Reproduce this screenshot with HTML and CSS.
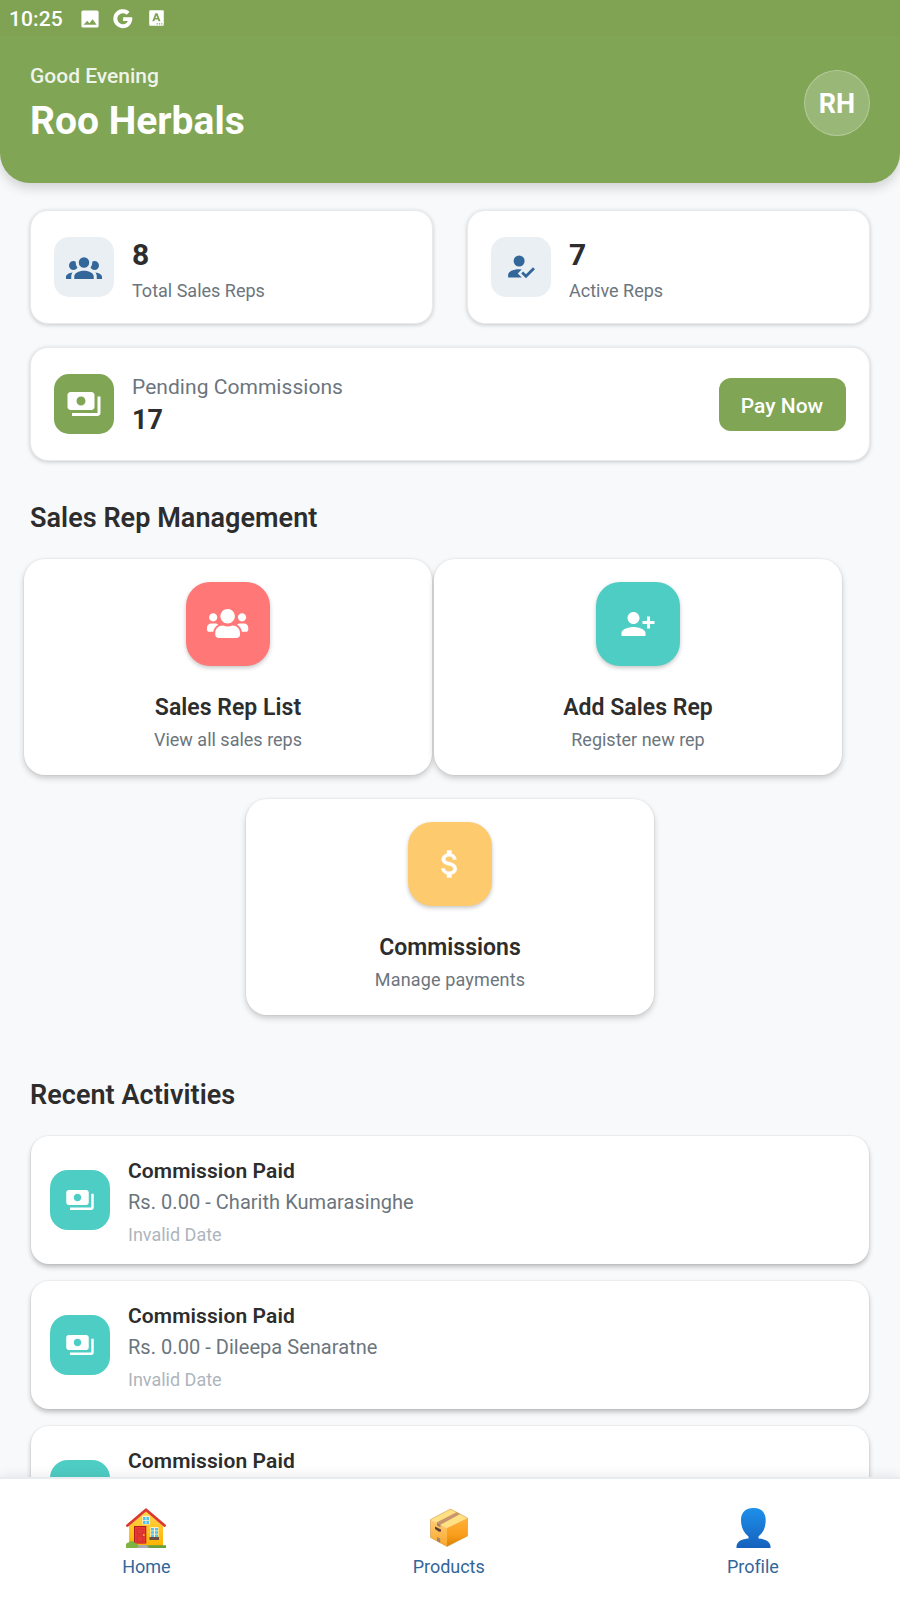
FILE: index.html
```html
<!DOCTYPE html>
<html lang="en">
<head>
<meta charset="utf-8">
<title>Roo Herbals</title>
<link rel="stylesheet" href="styles.css">
</head>
<body>
<svg class="sprite" aria-hidden="true">
  <symbol id="payments" viewBox="0 0 24 24"><path d="M19 14V6c0-1.1-.9-2-2-2H3c-1.1 0-2 .9-2 2v8c0 1.1.9 2 2 2h14c1.1 0 2-.9 2-2zm-9-1c-1.66 0-3-1.34-3-3s1.34-3 3-3 3 1.34 3 3-1.34 3-3 3zm13-6v11c0 1.1-.9 2-2 2H4v-2h17V7h2z"/></symbol>
</svg>
<div class="screen">
  <header class="header">
    <div class="statusbar">
      <span class="clock">10:25</span>
      <svg class="status-photo" viewBox="0 0 18 18"><path fill-rule="evenodd" d="M2 .5h14q1.600 0 1.600 1.600v13.800q0 1.600-1.600 1.600H2Q.4 17.500.4 15.900V2.100Q.4.5 2 .5zM2.600 14.700h13L11.600 9.200l-3.200 4-2.200-2.400z"/></svg>
      <svg class="status-google" viewBox="0 0 20 20"><path d="M10.100 8.200h9.100a9.500 9.500 0 1 1-2.700-5.300l-2.900 2.800a5.500 5.500 0 1 0 1.300 6.200h-4.800z"/></svg>
      <svg class="status-letter" viewBox="0 0 15 16"><path fill-rule="evenodd" d="M1.200.2h12.600q1 0 1 1v13.600q0 1-1 1H1.200q-1 0-1-1V1.200q0-1 1-1zM6.300 3.200 3.300 11.200h2l.6-1.600h3l.6 1.600h2l-3-8zm1.100 2.200.9 2.700H6.500zM7.600 13.300v1.300h1.200v-1.300zm2.300 0v1.300h1.200v-1.300zm2.300 0v1.300h1.200v-1.300z"/></svg>
    </div>
    <div class="header-row">
      <div class="greeting">
        <div class="hello">Good Evening</div>
        <h1 class="name">Roo Herbals</h1>
      </div>
      <div class="avatar">RH</div>
    </div>
  </header>

  <main class="content">
    <div class="stats">
      <div class="card stat">
        <div class="tile pale"><svg class="i36" viewBox="0 0 24 24"><path d="M12,5.5A3.5,3.5 0 0,1 15.5,9A3.5,3.5 0 0,1 12,12.5A3.5,3.5 0 0,1 8.5,9A3.5,3.5 0 0,1 12,5.5M5,8C5.56,8 6.08,8.15 6.53,8.42C6.38,9.85 6.8,11.27 7.66,12.38C7.16,13.34 6.16,14 5,14A3,3 0 0,1 2,11A3,3 0 0,1 5,8M19,8A3,3 0 0,1 22,11A3,3 0 0,1 19,14C17.84,14 16.84,13.34 16.34,12.38C17.2,11.27 17.62,9.85 17.47,8.42C17.92,8.15 18.44,8 19,8M5.5,18.25C5.5,16.18 8.41,14.5 12,14.5C15.59,14.5 18.5,16.18 18.5,18.25V20H5.5V18.25M0,20V18.5C0,17.11 1.89,15.94 4.45,15.6C3.86,16.28 3.5,17.22 3.5,18.25V20H0M24,20H20.5V18.25C20.5,17.22 20.14,16.28 19.55,15.6C22.11,15.94 24,17.11 24,18.5V20Z"/></svg></div>
        <div class="stat-text"><div class="stat-value">8</div><div class="stat-label">Total Sales Reps</div></div>
      </div>
      <div class="card stat">
        <div class="tile pale"><svg class="i33" viewBox="0 0 24 24"><path d="M21.1,12.5L22.5,13.91L15.97,20.5L12.5,17L13.9,15.59L15.97,17.67L21.1,12.5M10,17L13,20H3V18C3,15.79 6.58,14 11,14L12.89,14.11L10,17M11,4A4,4 0 0,1 15,8A4,4 0 0,1 11,12A4,4 0 0,1 7,8A4,4 0 0,1 11,4Z"/></svg></div>
        <div class="stat-text"><div class="stat-value">7</div><div class="stat-label">Active Reps</div></div>
      </div>
    </div>

    <div class="card stat pending">
      <div class="tile green"><svg class="i36"><use href="#payments"/></svg></div>
      <div class="pending-text"><div class="pending-label">Pending Commissions</div><div class="pending-value">17</div></div>
      <button class="pay">Pay Now</button>
    </div>

    <h2 class="section">Sales Rep Management</h2>
    <div class="actions">
      <div class="action">
        <div class="badge red"><svg class="users" viewBox="0 0 640 512"><path d="M96 224c35.3 0 64-28.7 64-64s-28.7-64-64-64-64 28.7-64 64 28.7 64 64 64zm448 0c35.3 0 64-28.7 64-64s-28.7-64-64-64-64 28.7-64 64 28.7 64 64 64zm32 32h-64c-17.6 0-33.5 7.1-45.1 18.6 40.3 22.1 68.9 62 75.1 109.4h66c17.7 0 32-14.3 32-32v-32c0-35.3-28.7-64-64-64zm-256 0c61.9 0 112-50.1 112-112S381.9 32 320 32 208 82.1 208 144s50.1 112 112 112zm76.8 32h-8.3c-20.8 10-43.9 16-68.5 16s-47.6-6-68.5-16h-8.3C179.6 288 128 339.6 128 403.2V432c0 26.5 21.5 48 48 48h288c26.5 0 48-21.5 48-48v-28.8c0-63.600-51.600-115.200-115.200-115.200zm-223.700-13.400C161.500 263.100 145.600 256 128 256H64c-35.300 0-64 28.700-64 64v32c0 17.700 14.300 32 32 32h65.900c6.300-47.400 34.900-87.300 75.200-109.400z"/></svg></div>
        <div class="action-title">Sales Rep List</div>
        <div class="action-sub">View all sales reps</div>
      </div>
      <div class="action">
        <div class="badge teal"><svg class="i36" viewBox="0 0 24 24"><path d="M13 8c0-2.21-1.79-4-4-4S5 5.79 5 8s1.79 4 4 4 4-1.79 4-4zm2 2v2h3v3h2v-3h3v-2h-3V7h-2v3h-3zM1 18v2h16v-2c0-2.660-5.330-4-8-4s-8 1.340-8 4z"/></svg></div>
        <div class="action-title">Add Sales Rep</div>
        <div class="action-sub">Register new rep</div>
      </div>
    </div>
    <div class="actions centered">
      <div class="action">
        <div class="badge amber"><svg class="i36 dollar" viewBox="0 0 24 24"><path d="M11.800 10.900c-2.270-.590-3-1.200-3-2.150 0-1.090 1.010-1.850 2.700-1.850 1.780 0 2.440.850 2.500 2.100h2.210c-.070-1.720-1.120-3.300-3.210-3.810V3h-3v2.160c-1.940.420-3.500 1.680-3.500 3.610 0 2.310 1.910 3.460 4.700 4.130 2.500.6 3 1.480 3 2.410 0 .690-.490 1.790-2.700 1.790-2.060 0-2.870-.920-2.980-2.100h-2.200c.12 2.190 1.760 3.420 3.680 3.830V21h3v-2.150c1.950-.370 3.500-1.500 3.500-3.550 0-2.840-2.430-3.810-4.700-4.400z"/></svg></div>
        <div class="action-title">Commissions</div>
        <div class="action-sub wide">Manage payments</div>
      </div>
    </div>

    <h2 class="section recent">Recent Activities</h2>
    <div class="activities">
      <div class="activity">
        <div class="tile teal"><svg class="i30"><use href="#payments"/></svg></div>
        <div><div class="act-title">Commission Paid</div><div class="act-desc">Rs. 0.00 - Charith Kumarasinghe</div><div class="act-date">Invalid Date</div></div>
      </div>
      <div class="activity">
        <div class="tile teal"><svg class="i30"><use href="#payments"/></svg></div>
        <div><div class="act-title">Commission Paid</div><div class="act-desc">Rs. 0.00 - Dileepa Senaratne</div><div class="act-date">Invalid Date</div></div>
      </div>
      <div class="activity">
        <div class="tile teal"></div>
        <div><div class="act-title">Commission Paid</div></div>
      </div>
    </div>
  </main>

  <nav class="nav">
    <a class="nav-item">
      <svg class="emoji" viewBox="0 0 40 40">
        <defs><linearGradient id="wall" x1="0" y1="0" x2="0" y2="1"><stop offset="0" stop-color="#ffd54a"/><stop offset="1" stop-color="#ffb300"/></linearGradient></defs>
        <path fill="url(#wall)" d="M3 18 20 3l17 15v20H3z"/>
        <path fill="#689f38" d="M16 37.200h24V40H0v-1.200z"/>
        <path fill="#aaa" d="M12 37h9l2 3H10z"/>
        <path fill="#b71c1c" d="M8 18h12.300v17.500H8z"/>
        <path fill="#e53935" d="M9 19h10.300v16.500H9z"/>
        <path fill="none" stroke="#c62828" stroke-width=".6" d="M11 21h6v5h-6zM11 28h6v6h-6z"/>
        <circle cx="17.800" cy="27" r="1" fill="#ffc107"/>
        <path fill="#fff3c4" d="M16.200 7.800h7.600v8.700h-7.600zM24.300 19h8.200v11h-8.200z"/>
        <path fill="#4fc3f7" d="M17 9h2.600v3H17zM20.400 9H23v3h-2.600zM17 12.800h2.600V16H17zM20.400 12.800H23V16h-2.600zM25 20h3v2.500h-3zM29 20h3v2.500h-3zM25 23.300h3v2.500h-3zM29 23.300h3v2.500h-3zM25 26.600h3V29h-3zM29 26.600h3V29h-3z"/>
        <path fill="#6d4c41" d="M23.500 29h9.500v3h-9.500z"/>
        <path fill="none" stroke="#db3830" stroke-width="2.800" stroke-linecap="round" stroke-linejoin="round" d="M1.500 17.500 20 1.800l18.500 15.700"/>
        <path fill="#7cb342" d="M0 40v-3.500q.5-2 2.500-2 1.500-2 4-1.500 2 .2 2.500 2.300 3 .2 3.200 2.700l-1 2z"/>
      </svg>
      <span>Home</span>
    </a>
    <a class="nav-item">
      <svg class="emoji" viewBox="0 0 40 40">
        <defs>
          <linearGradient id="boxl" x1="0" y1="0" x2="0" y2="1"><stop offset="0" stop-color="#ffcc74"/><stop offset="1" stop-color="#fba62a"/></linearGradient>
          <linearGradient id="boxr" x1="0" y1="0" x2="0" y2="1"><stop offset="0" stop-color="#ffb13b"/><stop offset=".6" stop-color="#f99d1c"/><stop offset="1" stop-color="#d98200"/></linearGradient>
        </defs>
        <path fill="#ffe082" d="M1.500 11.500 21.500 1 38.500 10 18 20z"/>
        <path fill="url(#boxl)" d="M1.500 11.500 18 20v18.500L1.500 29.500z"/>
        <path fill="url(#boxr)" d="M18 20 38.500 10v18L18 38.500z"/>
        <path fill="#c8956c" d="M7.500 14.500 27.500 4.200l3.700 1.900L11.500 16.800z"/>
        <path fill="#a1806e" d="M8 14.800l3.500 2v2.500L8 17.500zM8 29l3.200 1.700v4.100L8 33z"/>
        <path fill="#5d4037" d="M6 18.500l6 3v2l-2 .3-4-2.700z"/>
        <path fill="none" stroke="#c78b2c" stroke-width=".5" d="M1.500 11.500 21.500 1l17 9v18L18 38.500l-16.500-9z"/>
      </svg>
      <span>Products</span>
    </a>
    <a class="nav-item">
      <svg class="emoji" viewBox="0 0 40 40">
        <defs><linearGradient id="bust" x1="0" y1="0" x2="0" y2="1"><stop offset="0" stop-color="#1e90ea"/><stop offset="1" stop-color="#1561bd"/></linearGradient></defs>
        <path fill="url(#bust)" d="M20.500 0c8 0 12.200 4.500 12.200 12 0 7-2.200 12.500-7.200 16.500v2C32 31 36.500 33 37.500 38v2h-34v-2C4.500 33 9 31 15.500 30.500v-2C10.500 24.500 8 19 8 12 8 4.500 12.500 0 20.500 0z"/>
      </svg>
      <span>Profile</span>
    </a>
  </nav>
</div>
</body>
</html>
```
FILE: styles.css
```css
* { box-sizing: border-box; }
body { margin: 0; font-family: Roboto, sans-serif; color: #2d2d2d; }
h1, h2 { margin: 0; }
svg { display: block; fill: currentColor; }
.sprite { position: absolute; width: 0; height: 0; }

.screen {
  display: flex;
  flex-direction: column;
  width: 900px;
  height: 1600px;
  overflow: hidden;
  background: #f8f9fb;
}

.header {
  flex: none;
  height: 183px;
  border-radius: 0 0 30px 30px;
  background: #80a554;
  color: #fff;
  box-shadow: 0 5px 12px rgba(0, 0, 0, .16);
}
.statusbar {
  display: flex;
  align-items: center;
  height: 36px;
  padding: 0 9px;
  background: #7fa353;
}
.clock { width: 72px; font-size: 21px; font-weight: 500; letter-spacing: .1px; line-height: 38px; padding-top: 2px; }
.status-photo { width: 18px; height: 18px; margin-top: 1px; }
.status-google { width: 20px; height: 20px; margin: 1px 0 0 14px; }
.status-letter { width: 15px; height: 16px; margin-left: 16px; }
.header-row {
  display: flex;
  align-items: flex-start;
  justify-content: space-between;
  padding: 26px 30px 0;
}
.hello { font-size: 21px; font-weight: 500; line-height: 28px; opacity: .88; }
.name { margin-top: 6px; font-size: 39px; font-weight: 700; line-height: 50px; }
.avatar {
  width: 66px;
  height: 66px;
  margin-top: 8px;
  border: 1.5px solid rgba(255, 255, 255, .28);
  border-radius: 50%;
  background: rgba(255, 255, 255, .2);
  font-size: 27px;
  font-weight: 700;
  line-height: 67px;
  text-align: center;
}

.content { flex: 1; min-height: 0; padding: 27px 30px 0; overflow: hidden; }
.stats { display: flex; gap: 34px; }
.card {
  border: 1px solid #e9eaec;
  border-radius: 18px;
  background: #fff;
  box-shadow: 0 1px 4px rgba(0, 0, 0, .2);
}
.stat { display: flex; flex: 1; gap: 18px; height: 114px; padding: 26px 23px; }
.tile {
  display: flex;
  flex: none;
  align-items: center;
  justify-content: center;
  width: 60px;
  height: 60px;
  border-radius: 15px;
  color: #fff;
}
.pale { background: #eaeff4; color: #336699; }
.green { background: #80a554; }
.teal { background: #4ecdc4; }
.red { background: #ff7777; }
.amber { background: #fdcb6e; }
.i36 { width: 36px; height: 36px; }
.i33 { width: 33px; height: 33px; }
.i30 { width: 30px; height: 30px; }
.pale svg { margin-top: -1px; }
.pale .i33 { margin-left: -1px; }
.users { width: 41.25px; height: 33px; margin-top: -1px; }
.dollar { stroke: currentColor; stroke-width: .3; }
.stat-value { font-size: 30px; font-weight: 700; line-height: 36px; }
.stat-label { margin-top: 6px; font-size: 18px; line-height: 24px; color: #6c757d; }
.pending { margin-top: 23px; }
.pending-text { flex: 1; }
.pending-label { font-size: 21px; line-height: 26px; color: #6c757d; letter-spacing: .04px; }
.pending-value { margin-top: 3px; font-size: 27px; font-weight: 700; line-height: 34px; }
.pay {
  width: 127px;
  height: 53px;
  margin-top: 4px;
  padding: 2px 1px 0 0;
  border: 0;
  border-radius: 12px;
  background: #80a554;
  color: #fff;
  font: 500 21px/28px Roboto, sans-serif;
}

.section { margin-top: 39px; font-size: 27px; font-weight: 600; line-height: 36px; letter-spacing: .05px; }
.actions { display: flex; gap: 2px; margin: 23px 0 0 -6px; }
.actions.centered { justify-content: center; margin: 24px 0 0; }
.action {
  display: flex;
  flex-direction: column;
  align-items: center;
  width: 408px;
  height: 216px;
  padding-top: 23px;
  border-radius: 21px;
  background: #fff;
  box-shadow: 0 0 0 1px rgba(0, 0, 0, .03), 0 3px 6px rgba(0, 0, 0, .2);
}
.badge {
  display: flex;
  align-items: center;
  justify-content: center;
  width: 84px;
  height: 84px;
  border-radius: 24px;
  color: #fff;
  box-shadow: 0 2px 4px rgba(0, 0, 0, .22);
}
.action-title { margin-top: 27px; font-size: 23px; font-weight: 600; line-height: 30px; letter-spacing: .03px; }
.action-sub { margin-top: 5px; font-size: 18px; line-height: 24px; color: #6c757d; }
.action-sub.wide { letter-spacing: .15px; }

.recent { margin-top: 62px; }
.activities { display: flex; flex-direction: column; gap: 17px; margin: 23px 1px 0; }
.activity {
  display: flex;
  flex: none;
  gap: 18px;
  height: 128px;
  padding: 21px 19px;
  border-radius: 18px;
  background: #fff;
  box-shadow: 0 0 0 1px rgba(0, 0, 0, .03), 0 3px 5px rgba(0, 0, 0, .24);
}
.activity .tile { margin-top: 13px; border-radius: 18px; }
.act-title { font-size: 21px; font-weight: 600; line-height: 28px; letter-spacing: .1px; }
.act-desc { margin-top: 4px; font-size: 20px; line-height: 26px; color: #6c757d; letter-spacing: .04px; }
.act-date { margin-top: 9px; font-size: 18px; line-height: 22px; color: #adb5bd; }

.nav {
  display: flex;
  flex: none;
  justify-content: space-around;
  height: 123px;
  padding: 29px 0 0 1px;
  border-top: 2px solid #e9ecef;
  background: #fff;
  box-shadow: 0 0 12px rgba(0, 0, 0, .1);
}
.nav-item {
  display: flex;
  flex-direction: column;
  align-items: center;
  font-size: 18px;
  line-height: 24px;
  color: #336699;
}
.nav-item span { margin-top: 7px; letter-spacing: -.05px; }
.emoji { width: 40px; height: 40px; }
```
